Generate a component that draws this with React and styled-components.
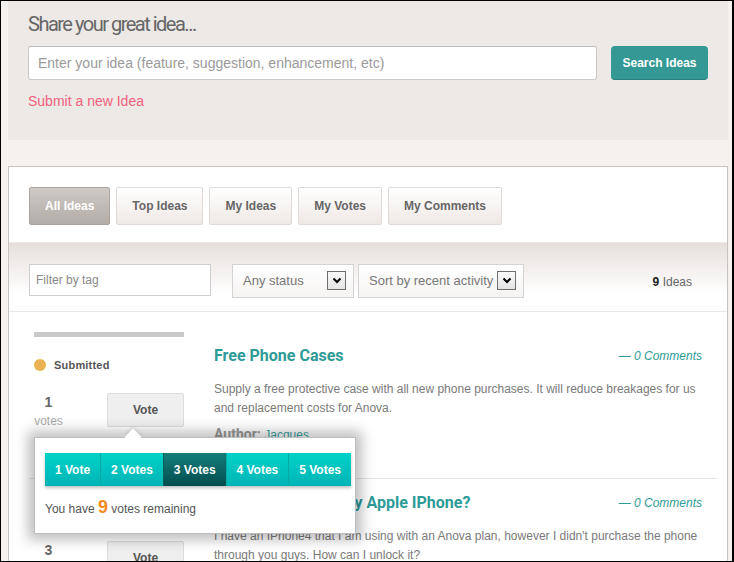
import React from 'react';
import styled, { createGlobalStyle } from 'styled-components';

const GlobalStyle = createGlobalStyle`
    body {
        margin: 0;
        font-family: "Liberation Sans", Arial, sans-serif;
    }
`;

const ideas = [
    {
        title: 'Free Phone Cases',
        text: 'Supply a free protective case with all new phone purchases. It will reduce breakages for us and replacement costs for Anova.',
        author: 'Jacques',
        votes: 1,
        status: 'Submitted',
        bar: true,
        popover: true,
    },
    {
        title: 'How can I unlock my Apple IPhone?',
        text: "I have an IPhone4 that I am using with an Anova plan, however I didn't purchase the phone through you guys. How can I unlock it?",
        author: 'Mark',
        votes: 3,
        status: 'Submitted',
        bar: false,
        popover: false,
    },
];

const tabs = ['All Ideas', 'Top Ideas', 'My Ideas', 'My Votes', 'My Comments'];
const voteOptions = ['1 Vote', '2 Votes', '3 Votes', '4 Votes', '5 Votes'];

const Chevron = () => (
    <svg width="10" height="7" viewBox="0 0 10 7">
        <path d="M1.5 1.5 L5 5 L8.5 1.5" fill="none" stroke="#000" strokeWidth="2" />
    </svg>
);

const App = () => {
    return (
        <Frame>
            <GlobalStyle />
            <Header>
                <Heading>Share your great idea...</Heading>
                <SearchRow>
                    <IdeaInput placeholder="Enter your idea (feature, suggestion, enhancement, etc)" />
                    <SearchButton>Search Ideas</SearchButton>
                </SearchRow>
                <SubmitLink href="#">Submit a new Idea</SubmitLink>
            </Header>

            <Card>
                <TabBar>
                    {tabs.map((t, i) => (
                        <Tab key={t} $active={i === 0}>{t}</Tab>
                    ))}
                </TabBar>

                <FilterBar>
                    <TagInput placeholder="Filter by tag" />
                    <SelectBox $width={122}>
                        Any status
                        <ArrowBox><Chevron /></ArrowBox>
                    </SelectBox>
                    <SelectBox $width={166} $gap={4}>
                        Sort by recent activity
                        <ArrowBox><Chevron /></ArrowBox>
                    </SelectBox>
                    <Count><b>9</b> Ideas</Count>
                </FilterBar>

                {ideas.map((idea, i) => (
                    <IdeaRow key={idea.title} $first={i === 0}>
                        <LeftCol>
                            {idea.bar && <ProgressBar />}
                            <StatusLine $afterBar={idea.bar}>
                                <Dot />
                                {idea.status}
                            </StatusLine>
                            <VoteBlock>
                                <VoteCount>
                                    <Num>{idea.votes}</Num>
                                    <NumLabel>votes</NumLabel>
                                </VoteCount>
                                <VoteButton>Vote</VoteButton>
                                {idea.popover && (
                                    <Popover>
                                        <Segments>
                                            {voteOptions.map((v, j) => (
                                                <Segment key={v} $selected={j === 2}>{v}</Segment>
                                            ))}
                                        </Segments>
                                        <Remaining>
                                            You have <Big>9</Big> votes remaining
                                        </Remaining>
                                    </Popover>
                                )}
                            </VoteBlock>
                        </LeftCol>
                        <ContentCol $offset={i === 0 ? 14 : 0}>
                            <TitleRow>
                                <IdeaTitle>{idea.title}</IdeaTitle>
                                <Comments>— 0 Comments</Comments>
                            </TitleRow>
                            <Desc>{idea.text}</Desc>
                            <Author>
                                <b>Author:</b> <AuthorName>{idea.author}</AuthorName>
                            </Author>
                        </ContentCol>
                    </IdeaRow>
                ))}
            </Card>
        </Frame>
    );
};

export default App;

const Frame = styled.div`
    width: 734px;
    height: 562px;
    box-sizing: border-box;
    border: 1px solid #000;
    border-right-width: 2px;
    padding: 0 4px 0 7px;
    background-color: #f5f1ee;
    overflow: hidden;
`;

const Header = styled.header`
    height: 139px;
    box-sizing: border-box;
    padding: 9px 20px 0;
    background-color: #ece9e7;
`;

const Heading = styled.h1`
    margin: 0;
    font-family: Roboto, sans-serif;
    font-weight: 400;
    font-size: 20px;
    line-height: 28px;
    letter-spacing: -1.5px;
    color: #666;
`;

const SearchRow = styled.div`
    margin-top: 8px;
    display: flex;
    gap: 14px;
`;

const IdeaInput = styled.input`
    flex: 1;
    height: 34px;
    box-sizing: border-box;
    padding: 0 9px;
    border: 1px solid #c9c9c9;
    border-top-color: #bdbdbd;
    border-radius: 3px;
    background: #fff;
    font-family: "Liberation Sans", Arial, sans-serif;
    font-size: 14px;
    outline: none;

    &::placeholder {
        color: #9a9a9a;
    }
`;

const SearchButton = styled.button`
    width: 97px;
    height: 34px;
    border: none;
    border-bottom: 1px solid #2a7d7a;
    border-radius: 4px;
    background-color: #349995;
    color: #fff;
    font-family: "Liberation Sans", Arial, sans-serif;
    font-weight: bold;
    font-size: 12px;
`;

const SubmitLink = styled.a`
    display: block;
    margin-top: 12px;
    font-size: 14px;
    line-height: 18px;
    color: #f2617c;
    text-decoration: none;
`;

const Card = styled.section`
    margin-top: 26px;
    border: 1px solid #c6c2bf;
    background-color: #fff;
    min-height: 420px;
`;

const TabBar = styled.nav`
    padding: 20px 20px 0;
    display: flex;
    gap: 6px;
`;

const Tab = styled.button`
    height: 38px;
    padding: 0 15px;
    box-sizing: border-box;
    border: 1px solid ${({ $active }) => ($active ? '#aaa39e' : '#e0d9d5')};
    border-radius: 2px;
    background: ${({ $active }) =>
        $active
            ? 'linear-gradient(#cfcac6, #b3aca7)'
            : 'linear-gradient(#ffffff, #efe9e6)'};
    color: ${({ $active }) => ($active ? '#fff' : '#666')};
    font-family: "Liberation Sans", Arial, sans-serif;
    font-weight: bold;
    font-size: 12px;
`;

const FilterBar = styled.div`
    margin-top: 17px;
    padding: 21px 35px 13px 20px;
    display: flex;
    align-items: flex-start;
    background: linear-gradient(#e6dfdc, #ffffff 75%);
    border-top: 1px solid #ece7e4;
    border-bottom: 1px solid #e8e8e8;
`;

const TagInput = styled.input`
    width: 182px;
    height: 32px;
    box-sizing: border-box;
    padding: 0 6px;
    border: 1px solid #cfcfcf;
    background: #fff;
    font-family: "Liberation Sans", Arial, sans-serif;
    font-size: 12px;
    outline: none;

    &::placeholder {
        color: #888;
    }
`;

const SelectBox = styled.div`
    width: ${({ $width }) => $width}px;
    height: 34px;
    margin-left: ${({ $gap }) => ($gap ? $gap : 21)}px;
    box-sizing: border-box;
    padding: 0 7px 2px 10px;
    display: flex;
    align-items: center;
    justify-content: space-between;
    border: 1px solid #d3d3d3;
    background: linear-gradient(#ffffff, #f6f4f3);
    font-size: 13px;
    color: #777;
    white-space: nowrap;
`;

const ArrowBox = styled.span`
    width: 19px;
    height: 19px;
    box-sizing: border-box;
    display: flex;
    align-items: center;
    justify-content: center;
    border: 1px solid #6e6e6e;
    background: linear-gradient(#fafafa, #e4e4e4);
`;

const Count = styled.div`
    margin-left: auto;
    margin-top: 11px;
    font-size: 12px;
    color: #666;

    b {
        color: #222;
    }
`;

const IdeaRow = styled.article`
    margin: 0 10px 0 20px;
    padding: ${({ $first }) => ($first ? 20 : 14)}px 15px 34px 5px;
    display: flex;
    gap: 30px;
    border-top: ${({ $first }) => ($first ? 'none' : '1px solid #e6e6e6')};
`;

const LeftCol = styled.div`
    width: 150px;
    flex-shrink: 0;
`;

const ProgressBar = styled.div`
    height: 5px;
    background-color: #c9c9c9;
`;

const StatusLine = styled.div`
    margin-top: ${({ $afterBar }) => ($afterBar ? 20 : 12)}px;
    display: flex;
    align-items: center;
    gap: 8px;
    height: 16px;
    font-size: 11px;
    font-weight: bold;
    letter-spacing: 0.2px;
    color: #555;
`;

const Dot = styled.span`
    width: 12px;
    height: 12px;
    border-radius: 50%;
    background-color: #e9b451;
`;

const VoteBlock = styled.div`
    position: relative;
    margin-top: 20px;
    display: flex;
    justify-content: space-between;
    align-items: flex-start;
`;

const VoteCount = styled.div`
    width: 29px;
    text-align: center;
`;

const Num = styled.div`
    font-size: 14px;
    font-weight: bold;
    line-height: 18px;
    color: #666;
`;

const NumLabel = styled.div`
    margin-top: 2px;
    font-size: 12px;
    line-height: 16px;
    color: #aaa;
`;

const VoteButton = styled.button`
    width: 77px;
    height: 34px;
    border: 1px solid #dcdcdc;
    border-radius: 2px;
    background-color: #efefef;
    color: #555;
    font-family: "Liberation Sans", Arial, sans-serif;
    font-weight: bold;
    font-size: 12px;
`;

const Popover = styled.div`
    position: absolute;
    top: 44px;
    left: 0;
    z-index: 5;
    width: 322px;
    box-sizing: border-box;
    padding: 15px 10px 14px;
    border: 1px solid #bdbdbd;
    background-color: #fff;
    box-shadow: 0 0 12px 6px rgba(0, 0, 0, 0.25);

    &::before {
        content: '';
        position: absolute;
        top: -7px;
        left: 92px;
        width: 12px;
        height: 12px;
        background: #fff;
        transform: rotate(45deg);
        box-shadow: -2px -2px 3px rgba(0, 0, 0, 0.08);
    }
`;

const Segments = styled.div`
    position: relative;
    width: 306px;
    display: flex;
    box-shadow: 0 2px 3px rgba(0, 0, 0, 0.25);
`;

const Segment = styled.span`
    flex: 1 1 auto;
    height: 33px;
    padding: 0 9px;
    display: flex;
    align-items: center;
    justify-content: center;
    border-left: 1px solid ${({ $selected }) => ($selected ? '#0a5f5e' : '#09a9a6')};
    background: ${({ $selected }) =>
        $selected
            ? 'linear-gradient(#157e7b, #024d4e)'
            : 'linear-gradient(#00d2c8, #00b4b5)'};
    color: #fff;
    font-weight: bold;
    font-size: 12px;
    white-space: nowrap;

    &:first-child {
        border-left: none;
    }
`;

const Remaining = styled.div`
    margin-top: 11px;
    font-size: 12px;
    line-height: 20px;
    color: #555;
`;

const Big = styled.b`
    font-size: 18px;
    color: #f58a1f;
`;

const ContentCol = styled.div`
    flex: 1;
    padding-top: ${({ $offset }) => $offset}px;
`;

const TitleRow = styled.div`
    height: 20px;
    display: flex;
    align-items: center;
    justify-content: space-between;
`;

const IdeaTitle = styled.h2`
    margin: 0;
    font-family: Roboto, sans-serif;
    font-weight: 700;
    font-size: 16px;
    line-height: 20px;
    color: #2e9b98;
`;

const Comments = styled.a`
    font-size: 12px;
    font-style: italic;
    color: #2e9b98;
`;

const Desc = styled.p`
    margin: 14px 0 0;
    font-size: 12px;
    line-height: 19px;
    color: #7a7a7a;
`;

const Author = styled.div`
    margin-top: 7px;
    line-height: 18px;
    font-family: Roboto, sans-serif;
    font-size: 14px;
    color: #999;
`;

const AuthorName = styled.a`
    font-family: "Liberation Sans", Arial, sans-serif;
    font-size: 12px;
    color: #3aa6a2;
`;
